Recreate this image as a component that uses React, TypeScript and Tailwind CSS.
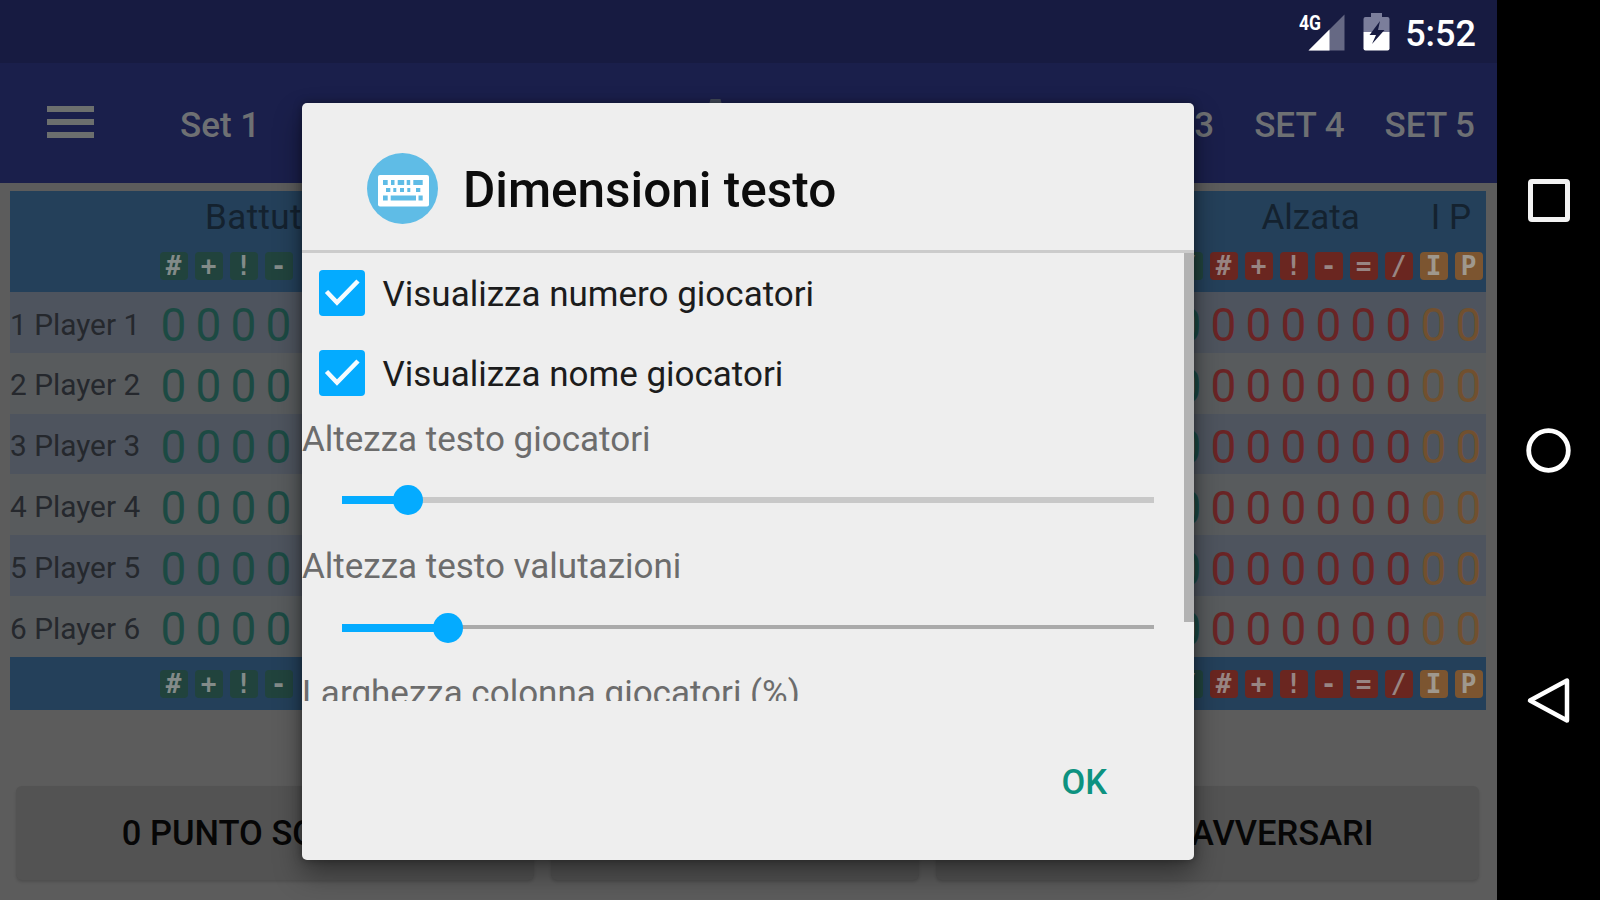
import clsx from 'clsx';

type Tone = 'green' | 'red' | 'orange';

type Column = {
  symbol: string;
  tone: Tone;
};

const LEFT_COLUMNS: Column[] = [
  { symbol: '#', tone: 'green' },
  { symbol: '+', tone: 'green' },
  { symbol: '!', tone: 'green' },
  { symbol: '-', tone: 'green' },
];

const RIGHT_COLUMNS: Column[] = [
  { symbol: '/', tone: 'green' },
  { symbol: '#', tone: 'red' },
  { symbol: '+', tone: 'red' },
  { symbol: '!', tone: 'red' },
  { symbol: '-', tone: 'red' },
  { symbol: '=', tone: 'red' },
  { symbol: '/', tone: 'red' },
  { symbol: 'I', tone: 'orange' },
  { symbol: 'P', tone: 'orange' },
];

const PLAYERS = [1, 2, 3, 4, 5, 6];

const badgeTone: Record<Tone, string> = {
  green: 'bg-[#21433d] text-[#838b89]',
  red: 'bg-[#6a2620] text-[#988583]',
  orange: 'bg-[#7c5530] text-[#9f988d]',
};

const scoreTone: Record<Tone, string> = {
  green: 'text-[#1c4a43]',
  red: 'text-[#6a2425]',
  orange: 'text-[#71502f]',
};

function Badges({ columns }: { columns: Column[] }) {
  return (
    <div className="flex">
      {columns.map((c, i) => (
        <div key={i} className="flex w-[35px] justify-center">
          <span
            className={clsx(
              'flex size-7 items-center justify-center rounded-[4px] font-["DejaVu_Sans_Mono"] text-[26px] leading-none font-bold',
              badgeTone[c.tone]
            )}
          >
            {c.symbol}
          </span>
        </div>
      ))}
    </div>
  );
}

function Scores({ columns }: { columns: Column[] }) {
  return (
    <div className="flex pt-[6px] text-[46px] leading-[54px]">
      {columns.map((c, i) => (
        <span key={i} className={clsx('w-[35px] text-center', scoreTone[c.tone])}>
          0
        </span>
      ))}
    </div>
  );
}

function StatusBar() {
  return (
    <div className="flex h-[63px] items-start justify-end bg-[#171b41] pr-[21px] text-white">
      <svg className="mt-3 h-10 w-[46px]" viewBox="0 0 46 40">
        <path d="M9.500 38.500 45.500 2.500v36z" fill="#666984" />
        <path d="M9.500 38.500 30.500 17.500v21z" fill="#fff" />
        <text
          x="0"
          y="18"
          fill="#fff"
          fontFamily="Roboto"
          fontWeight="700"
          fontSize="20"
          textLength="22"
          lengthAdjust="spacingAndGlyphs"
        >
          4G
        </text>
      </svg>
      <svg className="mt-3 ml-[18px] h-10 w-[27px]" viewBox="0 0 27 40">
        <path d="M8 1h11v4h5.500q2 0 2 2v13H.5V7q0-2 2-2H8z" fill="#7b7e9b" />
        <path d="M.5 20h26v16.500q0 2-2 2h-22q-2 0-2-2z" fill="#fff" />
        <path d="M17 9 6.500 23h6.500L9 32l12.500-14h-6.500z" fill="#171b41" />
      </svg>
      <span className="mt-[12px] ml-[15px] text-[36px] leading-[44px] font-medium">5:52</span>
    </div>
  );
}

function Toolbar() {
  return (
    <div className="relative flex h-[120px] items-center bg-[#1a1f4b] pr-[22px] pl-[47px] text-[35px] leading-none font-medium text-[#6e7073]">
      <div className="flex w-[47px] flex-col gap-[7px] pb-[2px]">
        <span className="h-[6px] bg-[#6c6f6e]" />
        <span className="h-[6px] bg-[#6c6f6e]" />
        <span className="h-[6px] bg-[#6c6f6e]" />
      </div>
      <span className="ml-[86px] pt-[4px]">Set 1</span>
      <div className="ml-auto flex gap-[40px] pt-[4px]">
        <span>SET 3</span>
        <span>SET 4</span>
        <span>SET 5</span>
      </div>
      {/* top of the page title, peeking out over the dialog */}
      <svg className="absolute top-[34px] left-[706px] h-[10px] w-[150px]" viewBox="0 0 150 10">
        <path d="M2.500 10 4.500 2h10l2 8zM142 6h5v4h-5z" fill="#424a58" />
      </svg>
    </div>
  );
}

function ScoreTable() {
  return (
    <div className="mt-[8px] ml-[10px] w-[1476px]">
      <div className="h-[101px] bg-[#24405a] pt-[7px] text-[35px] leading-[40px] text-[#14222f]">
        <div className="flex h-[54px]">
          <span className="ml-[195px] tracking-[0.4px]">Battuta</span>
          <span className="ml-auto">Alzata</span>
          <span className="mr-[15px] ml-[71px]">I P</span>
        </div>
        <div className="flex justify-between pl-[146px]">
          <Badges columns={LEFT_COLUMNS} />
          <Badges columns={RIGHT_COLUMNS} />
        </div>
      </div>
      {PLAYERS.map((n) => (
        <div
          key={n}
          className={clsx(
            'flex h-[60.8px] items-center',
            n % 2 ? 'bg-[#4e545e]' : 'bg-[#585b5d]'
          )}
        >
          <span className="w-[146px] pt-[5px] text-[29.8px] whitespace-nowrap text-[#25282d]">
            {n} Player {n}
          </span>
          <Scores columns={LEFT_COLUMNS} />
          <div className="ml-auto">
            <Scores columns={RIGHT_COLUMNS} />
          </div>
        </div>
      ))}
      <div className="flex h-[53px] items-center justify-between bg-[#24405a] pt-px pl-[146px]">
        <Badges columns={LEFT_COLUMNS} />
        <Badges columns={RIGHT_COLUMNS} />
      </div>
    </div>
  );
}

function PointButtons() {
  const button =
    'flex h-[94px] items-center justify-center rounded-[6px] bg-[#535353] pt-[3px] shadow-[0_2px_3px_rgba(0,0,0,0.15)]';

  return (
    <div className="mt-[76px] flex gap-[17px] pl-4 text-[34.5px] font-medium whitespace-nowrap text-[#060606]">
      <div className={clsx(button, 'w-[518px]')}>0 PUNTO SQUADRA</div>
      <div className={clsx(button, 'w-[368px]')} />
      <div className={clsx(button, 'w-[543px]')}>0 PUNTO AVVERSARI</div>
    </div>
  );
}

function KeyboardIcon() {
  return (
    <svg className="size-[71px]" viewBox="0 0 71 71">
      <circle cx="35.500" cy="35.500" r="35.500" fill="#5fbce6" />
      <rect x="11" y="22" width="51" height="31.500" rx="2" fill="#fff" />
      <g stroke="#5fbce6" strokeWidth="4.800" fill="none">
        <path d="M16 29.500h4.700M24 29.500h3.500M30.700 29.500h6.500M39.700 29.500h3.500M46.300 29.500h9.400" />
        <path d="M19 37h4.300M26.300 37h3M33 37h4M40.300 37h3M49 37h4.300" strokeWidth="4" />
        <path d="M16 45h4.700M23.700 45H49M51.500 45h4.200" />
      </g>
    </svg>
  );
}

function CheckRow({ label }: { label: string }) {
  return (
    <div className="flex h-[79.700px] items-center pl-[17px]">
      <span className="flex size-[46px] items-center justify-center rounded-[4px] bg-[#04abff]">
        <svg className="size-[46px]" viewBox="0 0 46 46" fill="none">
          <path d="M7.500 21.500 18 32.500 39 11" stroke="#f4fbff" strokeWidth="4.500" />
        </svg>
      </span>
      <span className="ml-[17.500px] pt-[4px] text-[35px] leading-none text-[#1c1c1c]">{label}</span>
    </div>
  );
}

function Slider({ value, thin }: { value: number; thin?: boolean }) {
  return (
    <div className="relative mx-10 flex h-[30px] items-center">
      <div className={clsx('w-full', thin ? 'mb-[2px] h-1 bg-[#aaaaaa]' : 'h-[6px] bg-[#c8c8c8]')} />
      <div className="absolute left-0 h-2 bg-[#04abff]" style={{ width: value }} />
      <div
        className="absolute size-[30px] rounded-full bg-[#04abff]"
        style={{ left: value - 15 }}
      />
    </div>
  );
}

function TextSizeDialog() {
  return (
    <div className="absolute top-[103px] left-[302px] flex h-[757px] w-[892px] flex-col rounded-[5px] bg-[#eeeeee] shadow-[0_14px_28px_rgba(0,0,0,0.4),0_0_8px_rgba(0,0,0,0.35)]">
      <div className="flex h-[150px] items-center border-b-[3px] border-[#cbcbcb] pt-[24px] pl-[65px]">
        <KeyboardIcon />
        <h1 className="ml-[25px] pt-[5px] text-[49.5px] leading-none font-medium text-[#0c0c0c]">
          Dimensioni testo
        </h1>
      </div>

      <div className="relative h-[448px] overflow-hidden text-[#6c6c6c]">
        <CheckRow label="Visualizza numero giocatori" />
        <CheckRow label="Visualizza nome giocatori" />
        <p className="mt-[7px] text-[35px] leading-[42px]">Altezza testo giocatori</p>
        <div className="mt-[24px]">
          <Slider value={65.5} />
        </div>
        <p className="mt-[31px] text-[35px] leading-[42px]">Altezza testo valutazioni</p>
        <div className="mt-[25px]">
          <Slider value={106} thin />
        </div>
        <p className="mt-[30px] text-[35px] leading-[42px]">Larghezza colonna giocatori (%)</p>
        <div className="absolute top-0 right-0 h-[369px] w-[10px] bg-[#b2b2b2]" />
      </div>

      <button className="mt-[58px] mr-[87px] self-end text-[34.5px] leading-[46px] font-medium text-[#0d9280]">
        OK
      </button>
    </div>
  );
}

function NavigationBar() {
  return (
    <div className="flex w-[103px] flex-col items-center bg-black">
      <svg className="mt-[176px] size-[50px]" viewBox="0 0 50 50" fill="none">
        <rect x="6.500" y="5.500" width="37" height="38" rx="1.500" stroke="#f2f2f2" strokeWidth="5" />
      </svg>
      <svg className="mt-[200px] size-[50px]" viewBox="0 0 50 50" fill="none">
        <circle cx="24.500" cy="24.500" r="19.800" stroke="#fff" strokeWidth="4.800" />
      </svg>
      <svg className="mt-[200px] size-[50px]" viewBox="0 0 50 50" fill="none">
        <path d="M43 4.500v40L6 24.500z" stroke="#fff" strokeWidth="4.500" strokeLinejoin="round" />
      </svg>
    </div>
  );
}

export default function App() {
  return (
    <div className="relative flex h-[900px] w-[1600px] overflow-hidden bg-black font-[Roboto,sans-serif]">
      <div className="w-[1497px] bg-[#5c5c5c]">
        <StatusBar />
        <Toolbar />
        <ScoreTable />
        <PointButtons />
      </div>
      <NavigationBar />
      <TextSizeDialog />
    </div>
  );
}
